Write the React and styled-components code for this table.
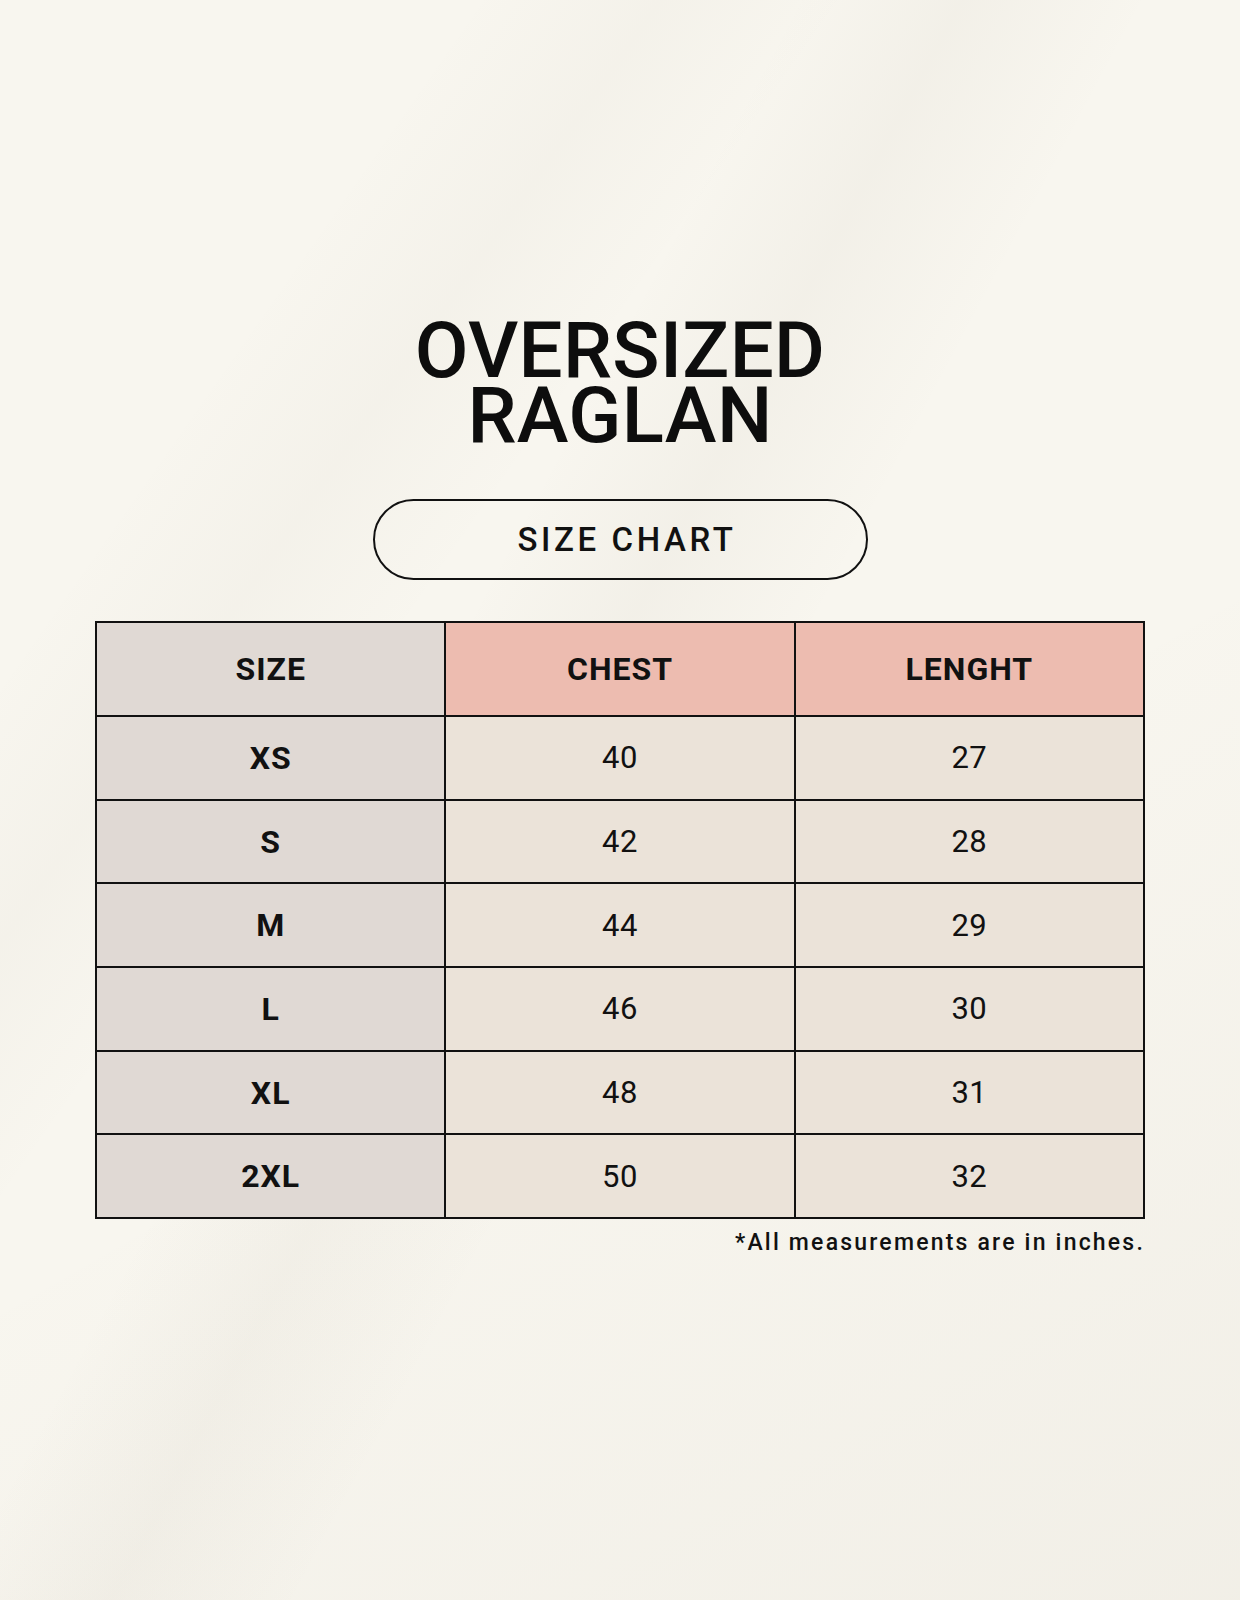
import React from 'react'
import styled, { createGlobalStyle } from 'styled-components'

const GlobalStyle = createGlobalStyle`
  html, body {
    margin: 0;
    padding: 0;
  }
  body {
    background: #f8f6ef;
    font-family: Roboto, "Liberation Sans", Arial, sans-serif;
    color: #111;
  }
`

const Page = styled.div`
  width: 1240px;
  min-height: 1600px;
  display: flex;
  flex-direction: column;
  align-items: center;
  padding-top: 318px;
  box-sizing: border-box;
  background:
    linear-gradient(118deg, rgba(0,0,0,0) 38%, rgba(120,105,80,0.045) 46%, rgba(0,0,0,0) 55%),
    linear-gradient(150deg, rgba(0,0,0,0) 55%, rgba(120,105,80,0.05) 100%),
    linear-gradient(125deg, rgba(0,0,0,0) 20%, rgba(120,105,80,0.03) 28%, rgba(0,0,0,0) 36%),
    #f8f6ef;
`

const Title = styled.h1`
  margin: 0;
  font-size: 78px;
  font-weight: 500;
  text-align: center;
  color: #0d0d0d;
  letter-spacing: 0.3px;
`

const TitleLine = styled.span`
  display: block;
  height: 65px;
  line-height: 65px;
`

const Pill = styled.div`
  margin-top: 51px;
  width: 495px;
  height: 81px;
  box-sizing: border-box;
  border: 2px solid #111;
  border-radius: 41px;
  display: flex;
  align-items: center;
  justify-content: center;
  padding-left: 14px;
  font-size: 33px;
  font-weight: 500;
  letter-spacing: 3.6px;
  line-height: 33px;
  color: #111;
`

const Grid = styled.div`
  margin-top: 41px;
  width: 1050px;
  box-sizing: border-box;
  display: grid;
  grid-template-columns: repeat(3, 1fr);
  grid-auto-rows: 81.7px;
  grid-template-rows: 92px;
  gap: 2px;
  padding: 2px;
  background: #111;
`

const Cell = styled.div`
  display: flex;
  align-items: center;
  justify-content: center;
  background: ${p => p.$tone === 'head' ? '#edbcb0' : p.$tone === 'size' ? '#e0d9d4' : '#ebe3d9'};
  font-size: ${p => p.$bold ? '32px' : '31px'};
  font-weight: ${p => p.$bold ? 700 : 400};
  letter-spacing: ${p => p.$bold ? '1px' : '0.5px'};
  color: #111;
`

const Note = styled.p`
  margin: 10px 0 0;
  width: 1050px;
  text-align: right;
  box-sizing: border-box;
  font-size: 23px;
  font-weight: 500;
  letter-spacing: 2.2px;
  color: #111;
`

const rows = [
  ['XS', 40, 27],
  ['S', 42, 28],
  ['M', 44, 29],
  ['L', 46, 30],
  ['XL', 48, 31],
  ['2XL', 50, 32],
]

export default function App() {
  return (
    <>
      <GlobalStyle />
      <Page>
        <Title>
          <TitleLine>OVERSIZED</TitleLine>
          <TitleLine>RAGLAN</TitleLine>
        </Title>
        <Pill>SIZE CHART</Pill>
        <Grid>
          <Cell $tone='size' $bold>SIZE</Cell>
          <Cell $tone='head' $bold>CHEST</Cell>
          <Cell $tone='head' $bold>LENGHT</Cell>
          {rows.map(([size, chest, length]) => (
            <React.Fragment key={size}>
              <Cell $tone='size' $bold>{size}</Cell>
              <Cell>{chest}</Cell>
              <Cell>{length}</Cell>
            </React.Fragment>
          ))}
        </Grid>
        <Note>*All measurements are in inches.</Note>
      </Page>
    </>
  )
}
